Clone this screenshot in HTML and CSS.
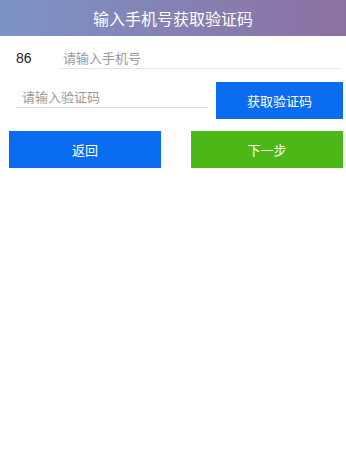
FILE: index.html
```html
<!DOCTYPE html>
<html lang="zh">
<head>
  <meta charset="UTF-8">
  <meta name="viewport" content="width=device-width, initial-scale=1.0">
  <title>验证手机号</title>
  <link rel="stylesheet" href="styles.css">
</head>
<body>
  <div class="header">输入手机号获取验证码</div>

  <div class="phone-row">
    <span class="area-code">86</span>
    <input class="phone-input" type="text" placeholder="请输入手机号">
  </div>

  <div class="code-row">
    <input class="code-input" type="text" placeholder="请输入验证码">
    <button class="btn btn-blue btn-code">获取验证码</button>
  </div>

  <div class="actions">
    <button class="btn btn-blue">返回</button>
    <button class="btn btn-green">下一步</button>
  </div>
</body>
</html>
```

FILE: styles.css
```css
body {
  margin: 0;
  padding: 0;
  font-family: "Noto Sans CJK SC", "Noto Sans", sans-serif;
  background-color: #ffffff;
  color: #222;
}
.header {
  height: 36px;
  line-height: 36px;
  text-align: center;
  font-size: 16px;
  color: #fff;
  background: linear-gradient(to right, #7c93c7, #8d70a2);
}
.phone-row {
  display: flex;
  align-items: center;
  height: 22px;
  margin: 11px 6px 0 16px;
}
.area-code {
  width: 44px;
  font-size: 14px;
  font-family: "Liberation Sans", "Noto Sans CJK SC", sans-serif;
}
input {
  border: none;
  outline: none;
  font-family: inherit;
  font-size: 13px;
  color: #333;
  background: transparent;
}
input::placeholder {
  color: #9a9a9a;
}
.phone-input {
  flex: 1;
  height: 22px;
  padding: 0 3px;
  box-sizing: border-box;
  border-bottom: 1px solid #e6e6e6;
}
.code-row {
  display: flex;
  align-items: flex-start;
  gap: 8px;
  margin: 13px 3px 0 16px;
}
.code-input {
  width: 192px;
  height: 22px;
  margin-top: 4px;
  padding: 0 6px;
  box-sizing: border-box;
  border-bottom: 1px solid #e0e0e0;
}
.btn {
  height: 37px;
  border: none;
  font-family: inherit;
  font-size: 13px;
  color: #fff;
  cursor: pointer;
}
.btn-blue {
  background: #0a6cf0;
}
.btn-green {
  background: #4cb818;
}
.btn-code {
  width: 127px;
}
.actions {
  display: flex;
  justify-content: space-between;
  margin: 12px 3px 0 9px;
}
.actions .btn {
  width: 152px;
}
```
